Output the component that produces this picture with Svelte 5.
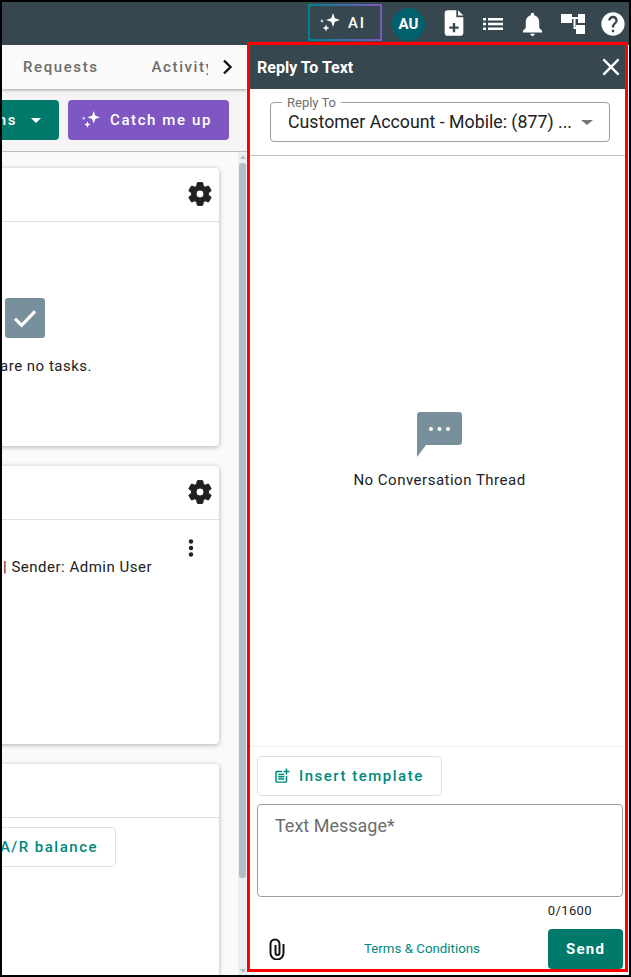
<script lang="ts">
	const cards = [
		{ id: 'tasks', height: 278 },
		{ id: 'notes', height: 278 },
		{ id: 'balance', height: 278 }
	];
	const sparkle =
		'M13 0l1.800 5.200L20 7l-5.200 1.800L13 14l-1.800-5.200L6 7l5.200-1.800L13 0zM6 11.500l1 2.500 2.500 1-2.500 1-1 2.500-1-2.500-2.500-1 2.500-1 1-2.500zM2 6l.6 1.400L4 8l-1.400.6L2 10l-.6-1.400L0 8l1.400-.6L2 6z';
	const gear =
		'M12,15.5A3.5,3.5 0 0,1 8.5,12A3.5,3.5 0 0,1 12,8.5A3.5,3.5 0 0,1 15.5,12A3.5,3.5 0 0,1 12,15.5M19.43,12.97C19.47,12.65 19.5,12.33 19.5,12C19.5,11.67 19.47,11.34 19.43,11L21.54,9.37C21.73,9.22 21.78,8.95 21.66,8.73L19.66,5.27C19.54,5.05 19.27,4.96 19.05,5.05L16.56,6.05C16.04,5.66 15.5,5.32 14.87,5.07L14.5,2.42C14.46,2.18 14.25,2 14,2H10C9.75,2 9.54,2.18 9.5,2.42L9.13,5.07C8.5,5.32 7.96,5.66 7.44,6.05L4.95,5.05C4.73,4.96 4.46,5.05 4.34,5.27L2.34,8.73C2.21,8.95 2.27,9.22 2.46,9.37L4.57,11C4.53,11.34 4.5,11.67 4.5,12C4.5,12.33 4.53,12.65 4.57,12.97L2.46,14.63C2.27,14.78 2.21,15.05 2.34,15.27L4.34,18.73C4.46,18.95 4.73,19.03 4.95,18.95L7.44,17.94C7.96,18.34 8.5,18.68 9.13,18.93L9.5,21.58C9.54,21.82 9.75,22 10,22H14C14.25,22 14.46,21.82 14.5,21.58L14.87,18.93C15.5,18.67 16.04,18.34 16.56,17.94L19.05,18.95C19.27,19.03 19.54,18.95 19.66,18.73L21.66,15.27C21.78,15.05 21.73,14.78 21.54,14.63L19.43,12.97Z';
</script>

<div class="frame">
	<header class="topbar">
		<button class="ai-btn">
			<svg viewBox="0 0 20 20" width="20" height="20"><path d={sparkle} fill="#fff" /></svg>
			<span>AI</span>
		</button>
		<div class="avatar">AU</div>
		<svg class="top-icon file" viewBox="0 0 24 24" width="28" height="28"><path d="M14 1H6.500C5.100 1 4 2.100 4 3.500v17C4 21.900 5.100 23 6.500 23h11c1.400 0 2.500-1.100 2.500-2.500V7h-6V1zM16 17h-3v3h-2v-3H8v-2h3v-3h2v3h3v2zM15.500 1v4.500H20L15.500 1z" fill="#fff" /></svg>
		<svg class="top-icon list" viewBox="0 0 24 24" width="24" height="24"><path d="M2 6h3v2.500H2zM7 6h15v2.500H7zM2 10.700h3v2.500H2zM7 10.700h15v2.500H7zM2 15.500h3V18H2zM7 15.500h15V18H7z" fill="#fff" /></svg>
		<svg class="top-icon bell" viewBox="0 0 24 24" width="27" height="27"><path d="M12 23c1.100 0 2-.9 2-2h-4c0 1.100.89 2 2 2zm6-7v-5c0-3.070-1.640-5.640-4.500-6.320V4c0-.83-.67-1.500-1.500-1.500s-1.500.67-1.500 1.500v.68C7.630 5.360 6 7.920 6 11v5l-2.500 2.500V20h17v-1.500L18 16z" fill="#fff" /></svg>
		<svg class="top-icon tree" viewBox="0 0 24 20" width="24" height="20"><path d="M0 0h11v9H0zM17 0h7v9h-7zM11 3h6v2h-6zM12.500 5h2v10h-2zM14.500 13h1v2h-1zM15 11h9v9h-9z" fill="#fff" /></svg>
		<svg class="top-icon help" viewBox="0 0 24 24" width="28" height="28"><path d="M12 2C6.480 2 2 6.480 2 12s4.480 10 10 10 10-4.480 10-10S17.520 2 12 2zm1 17h-2v-2h2v2zm2.070-7.750l-.9.920C13.450 12.900 13 13.500 13 15h-2v-.5c0-1.100.45-2.100 1.170-2.830l1.240-1.260c.37-.36.59-.86.59-1.410 0-1.100-.9-2-2-2s-2 .9-2 2H8c0-2.210 1.790-4 4-4s4 1.790 4 4c0 .88-.36 1.680-.93 2.250z" fill="#fff" /></svg>
	</header>

	<div class="body">
		<main class="main">
			<nav class="tabs">
				<span class="tab requests">Requests</span>
				<span class="tab activity">Activity</span>
				<svg class="chev" viewBox="0 0 24 24" width="24" height="24"><path d="M9 5.500L15.500 12 9 18.500" fill="none" stroke="#111" stroke-width="2.400" /></svg>
			</nav>
			<div class="actions">
				<button class="btn green">Actions <i class="caret"></i></button>
				<button class="btn purple">
					<svg viewBox="0 0 20 20" width="18" height="18"><path d={sparkle} fill="#fff" /></svg>
					Catch me up
				</button>
			</div>
			<div class="scroll-area">
				<div class="cards">
					{#each cards as card}
						<section class="card" style="height: {card.height}px">
							<div class="card-head">
								{#if card.id !== 'balance'}
									<svg class="gear" viewBox="1.500 1.500 21 21" width="24" height="24"><path d={gear} fill="#212121" stroke="#212121" stroke-width="0.800" /></svg>
								{/if}
							</div>
							{#if card.id === 'tasks'}
								<div class="empty">
									<div class="check">
										<svg viewBox="0 0 24 24" width="32" height="32"><path d="M4.500 12.500l5 5L19.500 7" fill="none" stroke="#fff" stroke-width="2.400" /></svg>
									</div>
									<p>There are no tasks.</p>
								</div>
							{:else if card.id === 'notes'}
								<div class="note">
									<svg class="more" viewBox="0 0 24 24" width="24" height="24"><circle cx="12" cy="5.500" r="2.200" /><circle cx="12" cy="12" r="2.200" /><circle cx="12" cy="18.500" r="2.200" /></svg>
									<p>Customer Account | Sender: Admin User</p>
								</div>
							{:else}
								<div class="balance">
									<button class="outline">View A/R balance</button>
								</div>
							{/if}
						</section>
					{/each}
				</div>
				<div class="scrollbar">
					<i class="arrow up"></i>
					<div class="track"><div class="thumb"></div></div>
					<i class="arrow down"></i>
				</div>
			</div>
		</main>

		<aside class="panel">
			<div class="panel-head">
				<span>Reply To Text</span>
				<svg viewBox="0 0 24 24" width="26" height="26"><path d="M5 5l14 14M19 5L5 19" fill="none" stroke="#fff" stroke-width="2.200" /></svg>
			</div>
			<div class="select-row">
				<div class="select">
					<span class="legend">Reply To</span>
					<span class="value">Customer Account - Mobile: (877) ...</span>
					<i class="caret grey"></i>
				</div>
			</div>
			<div class="thread">
				<svg viewBox="0 0 45 45" width="45" height="45"><path d="M3 0h39c1.700 0 3 1.300 3 3v27c0 1.700-1.300 3-3 3H9L0 45V3c0-1.700 1.300-3 3-3z" fill="#78909c" /><circle cx="14" cy="17" r="2" fill="#fff" /><circle cx="22.500" cy="17" r="2" fill="#fff" /><circle cx="31" cy="17" r="2" fill="#fff" /></svg>
				<p>No Conversation Thread</p>
			</div>
			<div class="composer">
				<button class="outline template">
					<svg viewBox="0 0 24 24" width="18" height="18"><path d="M17 19.220H5V7h7V5H5c-1.100 0-2 .9-2 2v12c0 1.100.9 2 2 2h12c1.100 0 2-.9 2-2v-7h-2v7.220zM19 2h-2v3h-3v2h3v3h2V7h3V5h-3V2zM7 9h8v2H7zM7 12h8v2H7zM7 15h8v2H7z" fill="#00897b" /></svg>
					Insert template
				</button>
				<div class="message">Text Message*</div>
				<div class="count">0/1600</div>
				<div class="send-row">
					<svg class="clip" viewBox="0 0 16 22" width="16" height="22"><path d="M14.500 6v9a6.500 6.500 0 0 1-13 0V6a4.500 4.500 0 0 1 9 0v9a2 2 0 0 1-4 0V7" fill="none" stroke="#111" stroke-width="2" /></svg>
					<span class="terms">Terms &amp; Conditions</span>
					<button class="send">Send</button>
				</div>
			</div>
		</aside>
	</div>
</div>

<style>
	:global(body) {
		margin: 0;
		background: #fff;
	}
	.frame {
		box-sizing: border-box;
		width: 631px;
		height: 977px;
		border: 2px solid #000;
		display: flex;
		flex-direction: column;
		overflow: hidden;
		font-family: Roboto, 'Liberation Sans', sans-serif;
		color: #212121;
		font-size: 15px;
		background: #fff;
	}
	button {
		font-family: inherit;
		cursor: pointer;
	}

	/* top bar */
	.topbar {
		height: 43px;
		flex-shrink: 0;
		background: #37474f;
		display: flex;
		align-items: center;
		position: relative;
		padding-left: 306px;
		box-sizing: border-box;
	}
	.ai-btn {
		box-sizing: border-box;
		width: 74px;
		height: 37px;
		margin-bottom: 2px;
		display: flex;
		align-items: center;
		justify-content: center;
		gap: 8px;
		background: transparent;
		border: 2px solid;
		border-image: linear-gradient(90deg, #00838f, #7e57c2) 1;
		color: #fff;
		font-weight: 500;
		font-size: 15px;
		letter-spacing: 1.8px;
		padding: 0 4px 0 0;
	}
	.avatar {
		width: 33px;
		height: 33px;
		border-radius: 50%;
		background: #00606b;
		color: #fff;
		font-weight: 700;
		font-size: 15px;
		display: flex;
		align-items: center;
		justify-content: center;
		margin-left: 10px;
		margin-top: 1px;
	}
	.top-icon {
		flex-shrink: 0;
	}
	.file {
		margin-left: 15px;
		margin-bottom: 2px;
	}
	.list {
		margin-left: 13px;
	}
	.bell {
		margin-left: 14px;
	}
	.tree {
		margin-left: 15px;
	}
	.help {
		margin-left: 14px;
	}

	.body {
		flex: 1;
		display: flex;
		min-height: 0;
	}

	/* left column, clipped by the panel */
	.main {
		width: 245px;
		flex-shrink: 0;
		display: flex;
		flex-direction: column;
		overflow: hidden;
		background: #fafafa;
	}
	.tabs {
		height: 44px;
		flex-shrink: 0;
		background: #fafafa;
		display: flex;
		align-items: center;
		position: relative;
		box-shadow: 0 1px 3px rgba(0, 0, 0, 0.35);
		z-index: 1;
	}
	.tab {
		font-weight: 500;
		font-size: 15px;
		letter-spacing: 1.6px;
		color: #6d6d6d;
	}
	.requests {
		margin-left: 21px;
	}
	.activity {
		margin-left: 53px;
		width: 56px;
		overflow: hidden;
		white-space: nowrap;
	}
	.chev {
		margin-left: 7px;
	}
	.actions {
		height: 63px;
		flex-shrink: 0;
		box-sizing: border-box;
		background: #f5f5f5;
		border-bottom: 1px solid #bdbdbd;
		display: flex;
		justify-content: flex-end;
		align-items: flex-start;
		padding: 11px 18px 0 0;
		gap: 9px;
	}
	.btn {
		height: 40px;
		border: 0;
		border-radius: 4px;
		color: #fff;
		font-weight: 500;
		font-size: 15px;
		letter-spacing: 1.6px;
		display: flex;
		align-items: center;
		flex-shrink: 0;
	}
	.green {
		background: #00796b;
		width: 120px;
		margin-left: -62px;
		justify-content: flex-end;
		padding: 0 18px 0 0;
		gap: 14px;
	}
	.caret {
		width: 0;
		height: 0;
		border-left: 5px solid transparent;
		border-right: 5px solid transparent;
		border-top: 5px solid #fff;
	}
	.caret.grey {
		border-top-color: #757575;
		border-left-width: 6px;
		border-right-width: 6px;
		border-top-width: 5px;
		margin-left: auto;
		margin-right: 2px;
	}
	.purple {
		background: #7e57c2;
		width: 161px;
		padding: 0 0 0 14px;
		gap: 10px;
		box-sizing: border-box;
		white-space: nowrap;
	}
	.scroll-area {
		flex: 1;
		min-height: 0;
		display: flex;
		overflow: hidden;
		background: #fafafa;
	}
	.cards {
		width: 236px;
		flex-shrink: 0;
		padding: 16px 0 0 0;
		display: flex;
		flex-direction: column;
		align-items: flex-end;
		gap: 20px;
		box-sizing: border-box;
		height: 900px;
	}
	.card {
		width: 300px;
		flex-shrink: 0;
		margin-right: 19px;
		background: #fff;
		border-radius: 4px;
		box-shadow: 0 1px 5px rgba(0, 0, 0, 0.3);
		position: relative;
	}
	.card-head {
		height: 53px;
		border-bottom: 1px solid #e0e0e0;
		position: relative;
		box-sizing: content-box;
	}
	.gear {
		position: absolute;
		right: 7px;
		top: 14px;
	}
	.empty {
		display: flex;
		flex-direction: column;
		align-items: flex-end;
		padding: 76px 127px 0 0;
	}
	.check {
		width: 40px;
		height: 40px;
		border-radius: 3px;
		background: #78909c;
		display: flex;
		align-items: center;
		justify-content: center;
		margin-right: 47px;
	}
	.empty p {
		margin: 18px 0 0;
		letter-spacing: 0.5px;
		white-space: nowrap;
		line-height: 20px;
	}
	.note {
		position: relative;
		display: flex;
		justify-content: flex-end;
		padding: 37px 67px 0 0;
	}
	.note p {
		margin: 0;
		white-space: nowrap;
		letter-spacing: 0.5px;
		line-height: 20px;
	}
	.more {
		position: absolute;
		right: 16px;
		top: 16px;
		fill: #212121;
	}
	.balance {
		display: flex;
		justify-content: flex-end;
		padding: 9px 103px 0 0;
	}
	.outline {
		background: #fff;
		border: 1px solid #e0e0e0;
		border-radius: 4px;
		height: 40px;
		color: #00897b;
		font-weight: 500;
		font-size: 15px;
		letter-spacing: 1.5px;
		padding: 0 17px;
		white-space: nowrap;
	}
	.scrollbar {
		width: 9px;
		background: #eceff1;
		display: flex;
		flex-direction: column;
		align-items: center;
		flex-shrink: 0;
	}
	.arrow {
		width: 0;
		height: 0;
		border-left: 3px solid transparent;
		border-right: 3px solid transparent;
		flex-shrink: 0;
	}
	.arrow.up {
		border-bottom: 4px solid #b0bec5;
		margin-top: 3px;
	}
	.arrow.down {
		border-top: 4px solid #b0bec5;
		margin-bottom: 2px;
	}
	.track {
		flex: 1;
		width: 100%;
		padding-top: 4px;
	}
	.thumb {
		width: 7px;
		height: 715px;
		margin: 0 auto;
		border-radius: 3px;
		background: #b0bec5;
	}

	/* reply panel, with the red highlight drawn as its border */
	.panel {
		box-sizing: border-box;
		width: 381px;
		margin-top: -3px;
		margin-bottom: 3px;
		border: 3px solid #f00;
		background: #fff;
		display: flex;
		flex-direction: column;
		flex-shrink: 0;
		position: relative;
		z-index: 2;
	}
	.panel-head {
		height: 44px;
		flex-shrink: 0;
		background: #37474f;
		color: #fff;
		font-weight: 700;
		font-size: 16px;
		display: flex;
		align-items: center;
		justify-content: space-between;
		padding: 0 1px 0 7px;
	}
	.select-row {
		height: 67px;
		flex-shrink: 0;
		box-sizing: border-box;
		border-bottom: 1px solid #bdbdbd;
		padding: 13px 15px 0 20px;
	}
	.select {
		position: relative;
		box-sizing: border-box;
		height: 40px;
		border: 1px solid #9e9e9e;
		border-radius: 4px;
		display: flex;
		align-items: center;
		padding: 0 14px 0 17px;
	}
	.legend {
		position: absolute;
		left: 11px;
		top: -7px;
		background: #fff;
		padding: 0 5px;
		font-size: 13px;
		line-height: 14px;
		color: #6d6d6d;
	}
	.value {
		font-size: 17.750px;
		color: #212121;
		white-space: nowrap;
	}
	.thread {
		flex: 1;
		display: flex;
		flex-direction: column;
		align-items: center;
		justify-content: center;
		box-sizing: border-box;
		min-height: 0;
		padding-left: 4px;
	}
	.thread p {
		margin: 13px 0 0;
		letter-spacing: 0.5px;
		line-height: 20px;
	}
	.composer {
		height: 223px;
		flex-shrink: 0;
		box-sizing: border-box;
		border-top: 1px solid #eeeeee;
		padding: 9px 2px 0 7px;
	}
	.template {
		display: flex;
		align-items: center;
		gap: 8px;
		width: 185px;
		padding: 0 0 0 15px;
		box-sizing: border-box;
	}
	.message {
		box-sizing: border-box;
		height: 93px;
		margin-top: 8px;
		border: 1px solid #9e9e9e;
		border-radius: 4px;
		padding: 10px 17px;
		font-size: 18px;
		line-height: 22px;
		color: #6d6d6d;
	}
	.count {
		text-align: right;
		padding-right: 31px;
		margin-top: 6px;
		font-size: 13px;
		letter-spacing: 0.4px;
		line-height: 16px;
	}
	.send-row {
		display: flex;
		align-items: center;
		margin-top: 10px;
	}
	.clip {
		margin-left: 12px;
	}
	.terms {
		margin-left: 79px;
		margin-bottom: 2px;
		color: #00897b;
		font-size: 13.300px;
	}
	.send {
		margin-left: auto;
		width: 75px;
		height: 40px;
		background: #00796b;
		color: #fff;
		border: 0;
		border-radius: 4px;
		font-weight: 700;
		font-size: 15px;
		letter-spacing: 1.25px;
	}
</style>
